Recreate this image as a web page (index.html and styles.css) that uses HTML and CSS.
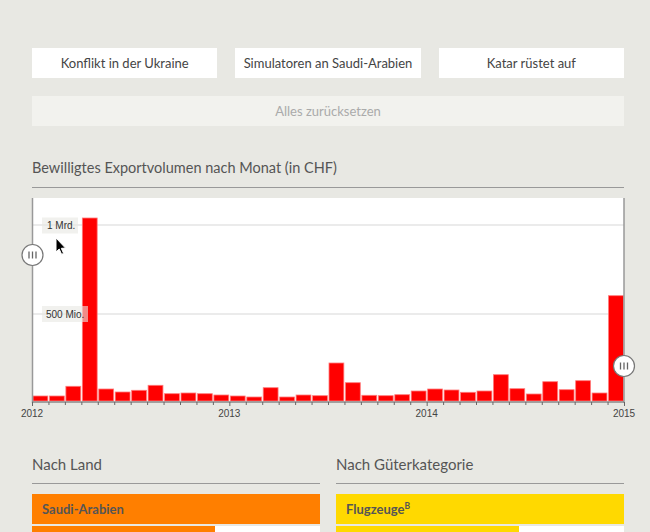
FILE: index.html
```html
<!DOCTYPE html>
<html lang="de">
<head>
<meta charset="utf-8">
<title>Kriegsmaterial Exporte</title>
<link rel="stylesheet" href="styles.css">
</head>
<body>
<div class="page">
  <div class="filters">
    <button class="filter">Konflikt in der Ukraine</button>
    <button class="filter">Simulatoren an Saudi-Arabien</button>
    <button class="filter">Katar rüstet auf</button>
  </div>
  <button class="reset">Alles zurücksetzen</button>

  <h2 class="section-title">Bewilligtes Exportvolumen nach Monat (in CHF)</h2>

  <svg class="chart" width="592" height="222" viewBox="0 0 592 222">
    <rect class="plot" x="0" y="0" width="592" height="204"/>
    <line class="grid" x1="0" y1="27" x2="592" y2="27"/>
    <line class="grid" x1="0" y1="116" x2="592" y2="116"/>
    <g id="bars" class="bars"></g>
    <g class="glabel">
      <rect x="10" y="19.5" width="36" height="16"/>
      <text x="15" y="31">1 Mrd.</text>
      <rect x="10" y="108" width="46" height="16"/>
      <text x="14" y="119.5">500 Mio.</text>
    </g>
    <line class="vaxis" x1="0.5" y1="0" x2="0.5" y2="205"/>
    <line class="vaxis" x1="592" y1="0" x2="592" y2="205"/>
    <line class="haxis" x1="0" y1="204" x2="592" y2="204"/>
    <g id="ticks" class="ticks"></g>
    <g class="years">
      <text x="0" y="219">2012</text>
      <text x="197.3" y="219">2013</text>
      <text x="394.7" y="219">2014</text>
      <text x="592" y="219">2015</text>
    </g>
    <g class="handle" transform="translate(0.5 57)">
      <circle r="10.5"/>
      <line x1="-3.5" y1="-3.5" x2="-3.5" y2="3.5"/>
      <line x1="0" y1="-3.5" x2="0" y2="3.5"/>
      <line x1="3.5" y1="-3.5" x2="3.5" y2="3.5"/>
    </g>
    <g class="handle" transform="translate(592 168)">
      <circle r="10.5"/>
      <line x1="-3.5" y1="-3.5" x2="-3.5" y2="3.5"/>
      <line x1="0" y1="-3.5" x2="0" y2="3.5"/>
      <line x1="3.5" y1="-3.5" x2="3.5" y2="3.5"/>
    </g>
    <path class="cursor" d="M24 40 L24 54 L27.2 51 L29.6 56.3 L31.6 55.4 L29.3 50.3 L33.5 50.1 Z"/>
  </svg>

  <div class="breakdown">
    <section class="col">
      <h3 class="section-title sub">Nach Land</h3>
      <div class="item orange">Saudi-Arabien</div>
      <div class="meter"><div class="fill orange" style="width:63.5%"></div></div>
    </section>
    <section class="col">
      <h3 class="section-title sub">Nach Güterkategorie</h3>
      <div class="item yellow">Flugzeuge<sup>B</sup></div>
      <div class="meter"><div class="fill yellow" style="width:63.5%"></div></div>
    </section>
  </div>
</div>
<script>
(function () {
  var h = [5,5,14.7,183,12,9,10.7,15.7,7.3,8,7.3,6,5,4,13.3,4,6,5.3,38,18.3,5.7,5.3,6.3,10,12,11,8.7,10,26.3,12.3,7,19.3,11.3,20.3,8,105.3];
  var ns = 'http://www.w3.org/2000/svg';
  var g = document.getElementById('bars');
  var slot = 592 / 36;
  h.forEach(function (v, i) {
    var r = document.createElementNS(ns, 'rect');
    r.setAttribute('x', (1 + i * slot).toFixed(2));
    r.setAttribute('y', (203 - v).toFixed(2));
    r.setAttribute('width', (slot - 1.6).toFixed(2));
    r.setAttribute('height', v.toFixed(2));
    g.appendChild(r);
  });
  var t = document.getElementById('ticks');
  for (var k = 0; k <= 36; k++) {
    var x = (k * slot) + 0.5;
    var l = document.createElementNS(ns, 'line');
    l.setAttribute('x1', x.toFixed(2));
    l.setAttribute('x2', x.toFixed(2));
    l.setAttribute('y1', 204);
    l.setAttribute('y2', k % 12 === 0 ? 208 : 207);
    t.appendChild(l);
  }
})();
</script>
</body>
</html>
```

FILE: styles.css
```css
* { box-sizing: border-box; }

body {
  margin: 0;
  background: #e8e8e3;
  font-family: Lato, "Open Sans", sans-serif;
  color: #555;
}

.page {
  width: 592px;
  margin-left: 32px;
  padding-top: 48px;
}

.filters {
  display: grid;
  grid-template-columns: repeat(3, 1fr);
  gap: 18px;
}

.filter,
.reset {
  display: block;
  height: 30px;
  border: 0;
  padding: 0;
  font-family: inherit;
  font-size: 13px;
  cursor: pointer;
}

.filter {
  background: #fff;
  color: #444;
}

.reset {
  width: 100%;
  margin-top: 18px;
  background: #f2f2ee;
  color: #aaa;
}

.section-title {
  margin: 32px 0 0;
  padding-bottom: 9px;
  border-bottom: 1px solid #999;
  font-size: 14.5px;
  font-weight: 400;
  line-height: 20px;
  color: #555;
}

.chart {
  display: block;
  margin-top: 10px;
  overflow: visible;
  font-family: "Liberation Sans", Arial, sans-serif;
}

.plot { fill: #fff; }
.grid { stroke: #ebebeb; stroke-width: 2; }
.bars rect { fill: #ff0000; stroke: #ff7a7a; stroke-width: 0.8; }
.glabel rect { fill: #e8e8e3; fill-opacity: 0.6; }
.glabel text { font-size: 10px; fill: #333; }
.vaxis { stroke: #999; stroke-width: 1.5; }
.haxis { stroke: #888; stroke-width: 1.6; }
.ticks line { stroke: #666; stroke-width: 1; }
.years text { font-size: 10px; fill: #444; text-anchor: middle; }
.handle circle { fill: #fff; stroke: #777; stroke-width: 1.2; }
.handle line { stroke: #666; stroke-width: 1.3; }
.cursor { fill: #000; stroke: #fff; stroke-width: 1; }

.breakdown {
  display: grid;
  grid-template-columns: 1fr 1fr;
  gap: 16px;
}

.sub {
  margin-top: 34px;
  font-size: 15px;
}

.item {
  margin-top: 10px;
  height: 30px;
  padding-left: 10px;
  font-size: 13px;
  font-weight: 700;
  line-height: 30px;
  color: #555;
}

.item sup {
  font-size: 8.5px;
  line-height: 0;
}

.meter {
  margin-top: 2px;
  height: 20px;
  background: #fff;
}

.fill { height: 100%; }

.orange { background: #ff7f00; }
.yellow { background: #ffd900; }
```
